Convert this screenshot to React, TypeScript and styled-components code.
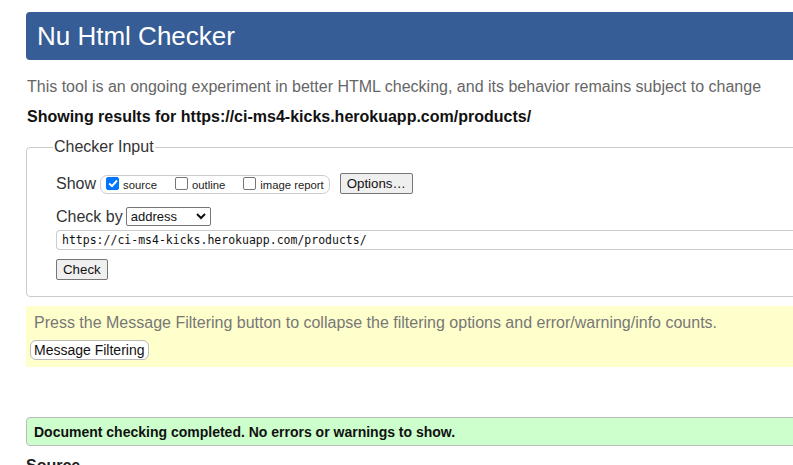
import React from 'react';
import styled, { createGlobalStyle } from 'styled-components';

const GlobalStyle = createGlobalStyle`
  html, body {
    margin: 0;
    padding: 0;
    background: #fff;
    overflow: hidden;
  }
  body {
    font-family: 'Liberation Sans', Arial, sans-serif;
    color: #222;
  }
`;

const Page = styled.div`
  width: 820px;
  padding: 12px 0 0 26px;
`;

const Header = styled.h1`
  margin: 0;
  height: 48px;
  display: flex;
  align-items: center;
  padding: 0 11px;
  background: #365d95;
  border-radius: 4px;
  color: #fff;
  font-size: 26px;
  font-weight: normal;
`;

const Intro = styled.p`
  margin: 18px 0 0 1px;
  font-size: 16px;
  color: #666;
`;

const Results = styled.p`
  margin: 12px 0 0 1px;
  font-size: 16px;
  font-weight: bold;
  color: #111;
`;

const Fieldset = styled.fieldset`
  margin: 12px 0 0;
  padding: 17px 29px 16px;
  border: 1px solid #ccc;
  border-radius: 4px;
  min-width: 0;
`;

const Legend = styled.legend`
  margin-left: -3px;
  padding: 0 1px;
  font-size: 16px;
  color: #333;
`;

const Row = styled.div<{ gap?: number }>`
  display: flex;
  align-items: center;
  gap: ${({ gap }) => gap ?? 4}px;
  font-size: 16px;
  color: #333;
`;

const Pill = styled.div`
  display: flex;
  align-items: center;
  gap: 18px;
  height: 17px;
  padding: 0 5px 0 5px;
  border: 1px solid #ccc;
  border-radius: 7px;
  margin-top: 2px;
`;

const CheckLabel = styled.label`
  display: flex;
  align-items: center;
  gap: 4px;
  font-size: 11.3px;
  color: #222;
`;

const Box = styled.span<{ checked?: boolean }>`
  width: 13px;
  height: 13px;
  border-radius: 2px;
  box-sizing: border-box;
  border: 1px solid ${({ checked }) => (checked ? '#0075ff' : '#767676')};
  background: ${({ checked }) => (checked ? '#0075ff' : '#fff')};
  display: flex;
  align-items: center;
  justify-content: center;
  margin-top: -3px;
`;

const Button = styled.button<{ small?: boolean }>`
  font-family: 'Liberation Sans', Arial, sans-serif;
  font-size: ${({ small }) => (small ? 14 : 13.3)}px;
  color: #111;
  background: ${({ small }) => (small ? '#fff' : '#efefef')};
  border: 1px solid ${({ small }) => (small ? '#bbb' : '#767676')};
  border-radius: ${({ small }) => (small ? 6 : 2)}px;
  padding: ${({ small }) => (small ? '1px 3px' : '2px 6px')};
  height: ${({ small }) => (small ? 20 : 21)}px;
  line-height: 1;
`;

const Select = styled.div`
  display: flex;
  align-items: center;
  justify-content: space-between;
  width: 85px;
  height: 19px;
  box-sizing: border-box;
  border: 1px solid #767676;
  border-radius: 2px;
  padding: 0 4px 0 4px;
  font-size: 13px;
  color: #111;
`;

const UrlInput = styled.div`
  margin-top: 4px;
  height: 20px;
  box-sizing: border-box;
  border: 1px solid #ccc;
  border-right: none;
  border-radius: 4px 0 0 4px;
  padding: 0 5px;
  display: flex;
  align-items: center;
  font-family: 'DejaVu Sans Mono', 'Liberation Mono', monospace;
  font-size: 11.5px;
  color: #111;
`;

const CheckRow = styled.div`
  margin-top: 9px;
`;

const Notice = styled.div`
  margin-top: 9px;
  background: #ffffcc;
  padding: 8px;
  height: 45px;
`;

const NoticeText = styled.p`
  margin: 0 0 8px;
  font-size: 16px;
  color: #777;
  white-space: nowrap;
`;

const NoticeButton = styled(Button)`
  margin-left: -4px;
`;

const Success = styled.div`
  margin-top: 50px;
  height: 29px;
  box-sizing: border-box;
  background: #ccffcc;
  border: 1px solid #bbb;
  border-radius: 4px;
  display: flex;
  align-items: center;
  padding-left: 7px;
  font-size: 14px;
  font-weight: bold;
  color: #111;
`;

const SourceHeading = styled.h2`
  margin: 11px 0 0;
  font-size: 16px;
  font-weight: bold;
  color: #222;
`;

const Tick = () => (
  <svg width="10" height="9" viewBox="0 0 10 9">
    <path d="M1.2 4.5 L4 7.2 L9 1.5" fill="none" stroke="#fff" strokeWidth="1.9" />
  </svg>
);

const Chevron = () => (
  <svg width="10" height="7" viewBox="0 0 10 7">
    <path d="M1 1 L5 5 L9 1" fill="none" stroke="#111" strokeWidth="2" />
  </svg>
);

export default function App() {
  return (
    <>
      <GlobalStyle />
      <Page>
        <Header>Nu Html Checker</Header>
        <Intro>
          This tool is an ongoing experiment in better HTML checking, and its behavior remains subject to change
        </Intro>
        <Results>Showing results for https://ci-ms4-kicks.herokuapp.com/products/</Results>
        <Fieldset>
          <Legend>Checker Input</Legend>
          <Row gap={4}>
            <span>Show</span>
            <Pill>
              <CheckLabel>
                <Box checked>
                  <Tick />
                </Box>
                source
              </CheckLabel>
              <CheckLabel>
                <Box />
                outline
              </CheckLabel>
              <CheckLabel>
                <Box />
                image report
              </CheckLabel>
            </Pill>
            <Button style={{ marginLeft: 6 }}>Options…</Button>
          </Row>
          <Row gap={3} style={{ marginTop: 13 }}>
            <span>Check by</span>
            <Select>
              <span>address</span>
              <Chevron />
            </Select>
          </Row>
          <UrlInput>https://ci-ms4-kicks.herokuapp.com/products/</UrlInput>
          <CheckRow>
            <Button>Check</Button>
          </CheckRow>
        </Fieldset>
        <Notice>
          <NoticeText>
            Press the Message Filtering button to collapse the filtering options and error/warning/info counts.
          </NoticeText>
          <NoticeButton small>Message Filtering</NoticeButton>
        </Notice>
        <Success>Document checking completed. No errors or warnings to show.</Success>
        <SourceHeading>Source</SourceHeading>
      </Page>
    </>
  );
}
